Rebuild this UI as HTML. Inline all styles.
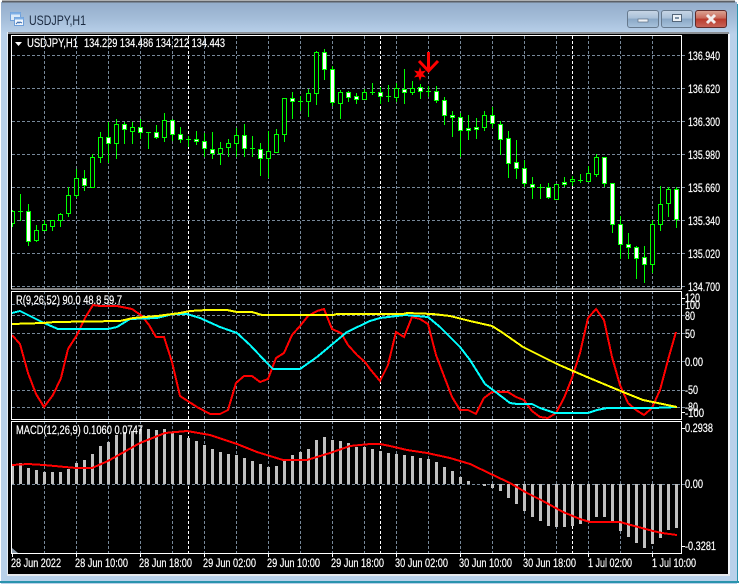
<!DOCTYPE html>
<html><head><meta charset="utf-8"><title>USDJPY,H1</title>
<style>
html,body{margin:0;padding:0;background:#fff;width:739px;height:584px;overflow:hidden}
svg{display:block}
text{font-family:"Liberation Sans",sans-serif;font-size:11.5px;fill:#fff;stroke:#fff;stroke-width:.2px}
</style></head><body>
<svg width="739" height="584" viewBox="0 0 739 584" xmlns="http://www.w3.org/2000/svg">
<defs>
<linearGradient id="f" x1="0" y1="0" x2="0" y2="1"><stop offset="0" stop-color="#93adcb"/><stop offset=".5" stop-color="#a3bcd8"/><stop offset="1" stop-color="#b9d1ea"/></linearGradient>
<linearGradient id="b" x1="0" y1="0" x2="0" y2="1"><stop offset="0" stop-color="#c8d6e6"/><stop offset=".45" stop-color="#a9c0d8"/><stop offset=".5" stop-color="#8aa8c6"/><stop offset="1" stop-color="#a8c2dc"/></linearGradient>
<linearGradient id="c" x1="0" y1="0" x2="0" y2="1"><stop offset="0" stop-color="#dca696"/><stop offset=".45" stop-color="#c9695a"/><stop offset=".5" stop-color="#b93a2c"/><stop offset="1" stop-color="#c8655a"/></linearGradient>
</defs>
<rect width="739" height="584" fill="#fff"/>
<path d="M1 584V4Q1 1 4 1H734Q737 1 737 4V584Z" fill="#b9d1ea"/>
<rect x="1" y="2" width="736" height="32" fill="url(#f)"/>
<path d="M2 1.5H735" stroke="#5c6066" stroke-width="2" fill="none"/>
<rect x="0" y="581" width="739" height="2" fill="#2a93ad"/>
<rect x="737" y="4" width="1" height="579" fill="#2a93ad"/>
<rect x="7" y="32" width="722" height="2" fill="#8b8f94"/>
<rect x="7" y="32" width="1" height="544" fill="#e6edf5"/>
<rect x="728" y="34" width="2" height="542" fill="#f2f5f9"/>
<rect x="7" y="574" width="723" height="2" fill="#e6e9ed"/>
<rect x="8" y="34" width="720" height="540" fill="#000"/>

<!-- title bar -->
<g>
<rect x="10.5" y="12.5" width="10" height="8" fill="#dceaf8" stroke="#6f9fd8"/>
<rect x="10.5" y="12.5" width="10" height="2" fill="#7fb0e6"/>
<rect x="14.5" y="17.5" width="9" height="8" fill="#f2f7fd" stroke="#6f9fd8"/>
<rect x="14.5" y="17.5" width="9" height="2" fill="#7fb0e6"/>
<path d="M16 24l2-2 1 1 1-1 2 1" stroke="#3d6fb0" fill="none"/>
</g>
<text x="29" y="25" textLength="57" lengthAdjust="spacingAndGlyphs" style="font-size:14px;fill:#1b2a40;stroke:none">USDJPY,H1</text>
<rect x="627.5" y="10.5" width="31" height="17" rx="2.5" fill="url(#b)" stroke="#66798d"/>
<rect x="638" y="19" width="10" height="3" fill="#eef2f6" stroke="#5f7185" stroke-width=".7"/>
<rect x="661.5" y="10.5" width="31" height="17" rx="2.5" fill="url(#b)" stroke="#66798d"/>
<rect x="672.5" y="14.5" width="9" height="7" fill="#eef2f6" stroke="#55677a"/>
<rect x="675" y="17" width="4" height="2" fill="#7e92a6"/>
<rect x="695.5" y="10.5" width="31" height="17" rx="2.5" fill="url(#c)" stroke="#5e2a2a"/>
<path d="M707 15l8 8M715 15l-8 8" stroke="#f3eeee" stroke-width="3" fill="none"/>

<!-- grid -->
<g shape-rendering="crispEdges" fill="none">
<g stroke="#778899" stroke-dasharray="3 2">
<path d="M12 55.5H685M12 88.5H685M12 121.5H685M12 154.5H685M12 187.5H685M12 220.5H685M12 253.5H685M12 286.5H685"/>
<path d="M12 304.5H685M12 315.5H685M12 333.5H685M12 361.5H685M12 390.5H685M12 407.5H685"/>
<path d="M12 484.5H685"/>
<path d="M44.5 36V553M76.5 36V553M108.5 36V553M140.5 36V553M172.5 36V553M204.5 36V553M236.5 36V553M268.5 36V553M300.5 36V553M332.5 36V553M364.5 36V553M396.5 36V553M428.5 36V553M460.5 36V553M492.5 36V553M524.5 36V553M556.5 36V553M588.5 36V553M620.5 36V553M652.5 36V553"/>
</g>
<path stroke="#fff" stroke-dasharray="3 2" d="M188.5 36V553M380.5 36V553M572.5 36V553"/>
</g>

<!-- candles -->
<g shape-rendering="crispEdges" stroke="#00ff00" fill="none">
<path d="M12.5 210V227M20.5 194V221M28.5 204V246M36.5 225V242M44.5 220V231M52.5 220V231M60.5 213V227M68.5 187V217M76.5 169V198M84.5 170V191M92.5 154V187M100.5 132V163M108.5 122V163M116.5 119V159M124.5 122V144M132.5 122V144M140.5 119V139M148.5 132V149M156.5 125V139M164.5 113V142M172.5 119V141M180.5 127V143M188.5 136V147M196.5 131V145M204.5 133V157M212.5 132V159M220.5 142V165M228.5 139V157M236.5 128V157M244.5 124V157M252.5 136V157M260.5 143V176M268.5 131V178M276.5 129V152M284.5 98V142M292.5 92V119M300.5 96V111M308.5 89V117M316.5 51V105M324.5 49V80M332.5 66V106M340.5 90V119M348.5 91V102M356.5 93V104M364.5 89V100M372.5 83V95M380.5 87V104M388.5 85V102M396.5 83V102M404.5 69V104M412.5 81V95M420.5 84V99M428.5 86V97M436.5 86V103M444.5 97V125M452.5 111V137M460.5 113V157M468.5 115V140M476.5 118V139M484.5 111V131M492.5 107V128M500.5 121V155M508.5 131V178M516.5 140V179M524.5 160V187M532.5 177V199M540.5 184V199M548.5 183V199M556.5 184V199M564.5 177V187M572.5 176V186M580.5 174V183M588.5 166V181M596.5 154V177M604.5 157V187M612.5 183V233M620.5 216V259M628.5 233V259M636.5 246V279M644.5 246V283M652.5 220V273M660.5 186V231M668.5 187V217M676.5 187V228"/>
<path d="M18 211.5h5M146 132.5h5M186 139.5h5M250 148.5h5M298 101.5h5M370 92.5h5M386 96.5h5M426 91.5h5M538 187.5h5M578 180.5h5"/>
<path fill="#000" d="M10.5 211.5h4v12h-4zM34.5 230.5h4v10h-4zM42.5 224.5h4v6h-4zM50.5 220.5h4v6h-4zM58.5 214.5h4v6h-4zM66.5 195.5h4v18h-4zM74.5 178.5h4v17h-4zM90.5 157.5h4v30h-4zM98.5 137.5h4v20h-4zM114.5 124.5h4v19h-4zM130.5 127.5h4v4h-4zM162.5 120.5h4v17h-4zM218.5 148.5h4v5h-4zM226.5 143.5h4v4h-4zM234.5 135.5h4v8h-4zM266.5 151.5h4v7h-4zM274.5 134.5h4v18h-4zM282.5 98.5h4v36h-4zM306.5 93.5h4v8h-4zM314.5 52.5h4v41h-4zM338.5 92.5h4v11h-4zM362.5 92.5h4v7h-4zM394.5 88.5h4v9h-4zM410.5 88.5h4v4h-4zM482.5 115.5h4v12h-4zM554.5 184.5h4v15h-4zM570.5 179.5h4v2h-4zM586.5 173.5h4v8h-4zM594.5 157.5h4v17h-4zM650.5 224.5h4v40h-4zM658.5 204.5h4v20h-4zM666.5 189.5h4v14h-4z"/>
<path fill="#fff" d="M26.5 211.5h4v30h-4zM82.5 178.5h4v7h-4zM106.5 137.5h4v6h-4zM122.5 124.5h4v5h-4zM138.5 127.5h4v5h-4zM154.5 132.5h4v5h-4zM170.5 120.5h4v14h-4zM178.5 134.5h4v5h-4zM194.5 139.5h4v2h-4zM202.5 141.5h4v7h-4zM210.5 149.5h4v4h-4zM242.5 135.5h4v13h-4zM258.5 149.5h4v9h-4zM290.5 98.5h4v3h-4zM322.5 52.5h4v17h-4zM330.5 69.5h4v33h-4zM346.5 92.5h4v5h-4zM354.5 96.5h4v3h-4zM378.5 92.5h4v4h-4zM402.5 89.5h4v3h-4zM418.5 87.5h4v4h-4zM434.5 91.5h4v9h-4zM442.5 100.5h4v15h-4zM450.5 115.5h4v2h-4zM458.5 117.5h4v13h-4zM466.5 128.5h4v2h-4zM474.5 127.5h4v2h-4zM490.5 115.5h4v8h-4zM498.5 124.5h4v15h-4zM506.5 138.5h4v25h-4zM514.5 162.5h4v6h-4zM522.5 168.5h4v15h-4zM530.5 184.5h4v3h-4zM546.5 187.5h4v10h-4zM562.5 182.5h4v2h-4zM602.5 157.5h4v26h-4zM610.5 183.5h4v41h-4zM618.5 224.5h4v20h-4zM626.5 244.5h4v3h-4zM634.5 247.5h4v11h-4zM642.5 257.5h4v7h-4zM674.5 189.5h4v30h-4z"/>
</g>

<!-- MACD bars -->
<path shape-rendering="crispEdges" fill="none" stroke="#c0c0c0" stroke-width="3" d="M12.5 484V466M20.5 484V463M28.5 484V468M36.5 484V470M44.5 484V472M52.5 484V472M60.5 484V472M68.5 484V469M76.5 484V463M84.5 484V460M92.5 484V454M100.5 484V446M108.5 484V442M116.5 484V435M124.5 484V432M132.5 484V431M140.5 484V429M148.5 484V429M156.5 484V430M164.5 484V429M172.5 484V432M180.5 484V435M188.5 484V438M196.5 484V441M204.5 484V445M212.5 484V449M220.5 484V452M228.5 484V454M236.5 484V455M244.5 484V458M252.5 484V461M260.5 484V464M268.5 484V467M276.5 484V466M284.5 484V461M292.5 484V455M300.5 484V452M308.5 484V449M316.5 484V440M324.5 484V437M332.5 484V440M340.5 484V441M348.5 484V443M356.5 484V447M364.5 484V447M372.5 484V449M380.5 484V451M388.5 484V453M396.5 484V454M404.5 484V455M412.5 484V456M420.5 484V458M428.5 484V459M436.5 484V462M444.5 484V467M452.5 484V471M460.5 484V477M468.5 484V481M484.5 484V486M492.5 484V488M500.5 484V491M508.5 484V498M516.5 484V504M524.5 484V511M532.5 484V517M540.5 484V521M548.5 484V526M556.5 484V527M564.5 484V527M572.5 484V526M580.5 484V524M588.5 484V522M596.5 484V517M604.5 484V517M612.5 484V522M620.5 484V531M628.5 484V537M636.5 484V543M644.5 484V548M652.5 484V544M660.5 484V538M668.5 484V530M676.5 484V528"/>
<path shape-rendering="crispEdges" fill="none" stroke="#ff0000" stroke-width="2" d="M12 465L28 464L44 465L76 468L92 468L108 461L124 452L140 443L165 433L187 431L210 435L237 444L257 452L283 460L307 460L330 453L350 446L370 444L380 444L390 446L407 450L427 453L450 458L470 464L493 475L510 483L527 493L543 501L563 512L580 519L590 522L620 522L627 524L653 531L662 533L677 535"/>

<!-- R pane lines -->
<g shape-rendering="crispEdges" fill="none" stroke-width="2">
<path stroke="#ff0000" d="M12 335L20 344L28 373L36 394L44 407L53 395L61 378L68 349L77 335L85 318L93 305L100 306L117 306L132 309L142 316L149 325L156 337L164 337L172 362L180 396L197 407L210 414L220 414L228 410L236 383L244 376L252 376L260 382L268 379L276 358L284 353L292 335L300 326L308 316L317 311L324 309L332 329L341 333L348 345L357 355L365 362L370 369L380 381L388 365L396 332L404 337L412 317L420 319L428 324L436 355L452 397L460 410L468 410L476 414L484 398L492 392L508 392L516 397L524 400L532 411L540 417L548 418L556 413L564 398L572 378L580 353L588 318L596 309L604 320L612 357L620 385L628 403L636 410L644 415L652 408L660 390L668 360L676 332"/>
<path stroke="#00ffff" d="M12 313L20 311L28 315L44 323L58 329L108 329L117 327L130 319L157 318L173 314L187 314L200 318L220 327L237 333L250 345L267 363L273 369L300 369L317 357L347 332L370 321L380 318L405 315L428 317L440 327L460 347L470 360L485 384L493 390L510 403L517 404L532 404L540 408L555 413L588 413L597 410L607 408L653 408L677 407"/>
<path stroke="#ffff00" d="M12 324L43 323L55 322L120 321L133 318L157 316L180 313L190 311L207 310L227 310L237 312L252 312L262 315L333 315L337 314L403 314L407 313L433 314L450 316L470 321L492 326L503 333L523 347L557 364L587 377L623 392L643 400L677 407"/>
</g>

<!-- edges and frames -->
<rect x="8" y="34" width="3" height="526" fill="#000"/>
<g shape-rendering="crispEdges" fill="none" stroke="#fff">
<rect x="11.5" y="35.5" width="670" height="253.5"/>
<rect x="11.5" y="291.5" width="670" height="128"/>
<rect x="11.5" y="421.5" width="670" height="132"/>
<path d="M12.5 553V557M76.5 553V557M140.5 553V557M204.5 553V557M268.5 553V557M332.5 553V557M396.5 553V557M460.5 553V557M524.5 553V557M588.5 553V557M652.5 553V557"/>
<path d="M682 298.5H685M682 412.5H685M682 428.5H685M682 546.5H685"/>
</g>
<path d="M12 548L18 553H12Z" fill="#8b9aa8"/>

<!-- object markers -->
<path fill="none" stroke="#ff0000" stroke-width="3" d="M428.5 52V71M419 61L428.5 71L438 61"/>
<polygon fill="#ff0000" points="420,67 421.5,71.4 426,70.5 423,74 426,77.5 421.5,76.6 420,81 418.5,76.6 414,77.5 417,74 414,70.5 418.5,71.4"/>

<!-- labels -->
<path d="M15 42H22L18.5 46Z" fill="#fff"/>
<text x="27" y="47" textLength="51" lengthAdjust="spacingAndGlyphs">USDJPY,H1</text>
<text x="84" y="47" textLength="141" lengthAdjust="spacingAndGlyphs">134.229 134.486 134.212 134.443</text>
<text x="16" y="304" textLength="106" lengthAdjust="spacingAndGlyphs">R(9,26,52) 90.0 48.8 59.7</text>
<text x="16" y="434" textLength="127" lengthAdjust="spacingAndGlyphs">MACD(12,26,9) 0.1060 0.0747</text>

<g>
<text x="688" y="60" textLength="32" lengthAdjust="spacingAndGlyphs">136.940</text>
<text x="688" y="93" textLength="32" lengthAdjust="spacingAndGlyphs">136.620</text>
<text x="688" y="126" textLength="32" lengthAdjust="spacingAndGlyphs">136.300</text>
<text x="688" y="159" textLength="32" lengthAdjust="spacingAndGlyphs">135.980</text>
<text x="688" y="192" textLength="32" lengthAdjust="spacingAndGlyphs">135.660</text>
<text x="688" y="225" textLength="32" lengthAdjust="spacingAndGlyphs">135.340</text>
<text x="688" y="258" textLength="32" lengthAdjust="spacingAndGlyphs">135.020</text>
<text x="688" y="291" textLength="32" lengthAdjust="spacingAndGlyphs">134.700</text>
<text x="685" y="302" textLength="15" lengthAdjust="spacingAndGlyphs">120</text>
<text x="685" y="309" textLength="15" lengthAdjust="spacingAndGlyphs">100</text>
<text x="685" y="320" textLength="10" lengthAdjust="spacingAndGlyphs">80</text>
<text x="685" y="338" textLength="10" lengthAdjust="spacingAndGlyphs">50</text>
<text x="685" y="366" textLength="18" lengthAdjust="spacingAndGlyphs">0.00</text>
<text x="685" y="394" textLength="13" lengthAdjust="spacingAndGlyphs">-50</text>
<text x="685" y="411" textLength="13" lengthAdjust="spacingAndGlyphs">-80</text>
<text x="685" y="417" textLength="19" lengthAdjust="spacingAndGlyphs">-100</text>
<text x="685" y="432" textLength="28" lengthAdjust="spacingAndGlyphs">0.2938</text>
<text x="685" y="488" textLength="18" lengthAdjust="spacingAndGlyphs">0.00</text>
<text x="685" y="550" textLength="31" lengthAdjust="spacingAndGlyphs">-0.3281</text>
</g>
<g>
<text x="11" y="567" textLength="50" lengthAdjust="spacingAndGlyphs">28 Jun 2022</text>
<text x="75" y="567" textLength="53" lengthAdjust="spacingAndGlyphs">28 Jun 10:00</text>
<text x="139" y="567" textLength="53" lengthAdjust="spacingAndGlyphs">28 Jun 18:00</text>
<text x="203" y="567" textLength="53" lengthAdjust="spacingAndGlyphs">29 Jun 02:00</text>
<text x="267" y="567" textLength="53" lengthAdjust="spacingAndGlyphs">29 Jun 10:00</text>
<text x="331" y="567" textLength="53" lengthAdjust="spacingAndGlyphs">29 Jun 18:00</text>
<text x="395" y="567" textLength="53" lengthAdjust="spacingAndGlyphs">30 Jun 02:00</text>
<text x="459" y="567" textLength="53" lengthAdjust="spacingAndGlyphs">30 Jun 10:00</text>
<text x="523" y="567" textLength="53" lengthAdjust="spacingAndGlyphs">30 Jun 18:00</text>
<text x="588" y="567" textLength="44" lengthAdjust="spacingAndGlyphs">1 Jul 02:00</text>
<text x="652" y="567" textLength="44" lengthAdjust="spacingAndGlyphs">1 Jul 10:00</text>
</g>
</svg>
</body></html>
